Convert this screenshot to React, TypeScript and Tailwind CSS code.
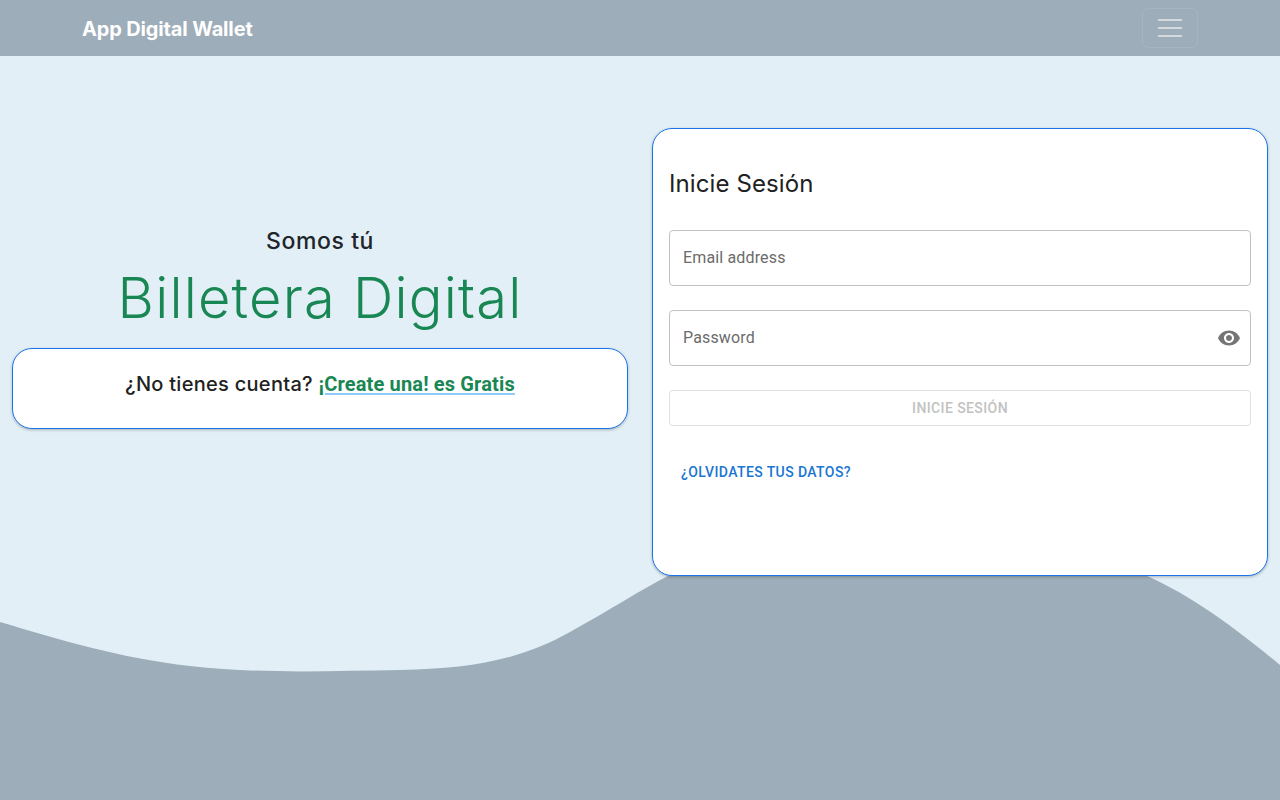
import React from 'react';

const headingFont = "font-['Inter',sans-serif]";

function EyeIcon() {
  return (
    <svg viewBox="0 0 24 24" className="w-6 h-6 fill-[#757575]">
      <path d="M12 4.5C7 4.5 2.73 7.61 1 12c1.73 4.39 6 7.5 11 7.5s9.27-3.11 11-7.5c-1.73-4.39-6-7.5-11-7.5zM12 17c-2.76 0-5-2.24-5-5s2.24-5 5-5 5 2.24 5 5-2.24 5-5 5zm0-8c-1.66 0-3 1.34-3 3s1.34 3 3 3 3-1.34 3-3-1.34-3-3-3z" />
    </svg>
  );
}

function Navbar() {
  return (
    <nav className="relative h-14 bg-[#9dadb9] flex items-center justify-between pl-[82px] pr-[82px]">
      <a href="#" className="font-['Inter',sans-serif] text-[20px] leading-7 pt-0.5 font-bold text-white tracking-[-0.15px]">
        App Digital Wallet
      </a>
      <button className="w-14 h-10 flex items-center justify-center rounded-md border border-white/10">
        <svg viewBox="0 0 30 30" className="w-[30px] h-[30px]">
          <path d="M3 7h24M3 15h24M3 23h24" stroke="#ffffff" strokeOpacity="0.55" strokeWidth="2" fill="none" />
        </svg>
      </button>
    </nav>
  );
}

function LoginCard() {
  return (
    <div className="h-[448px] p-4 bg-white border border-[#1a73e8] rounded-[20px] shadow-[0_1px_3px_rgba(0,0,0,0.25)]">
      <h2 className={`${headingFont} text-2xl leading-8 font-normal tracking-[0.1px] text-[#212121] mt-[23px] mb-[30px]`}>Inicie Sesión</h2>
      <div className="flex flex-col gap-6 font-['Roboto',sans-serif]">
        <input
          placeholder="Email address"
          className="h-14 w-full px-[13px] pb-0.5 rounded border border-[#c2c2c2] text-base tracking-[0.15px] outline-none placeholder:text-[#6b6b6b]"
        />
        <div className="relative">
          <input
            placeholder="Password"
            className="h-14 w-full px-[13px] pb-0.5 rounded border border-[#c2c2c2] text-base tracking-[0.15px] outline-none placeholder:text-[#6b6b6b]"
          />
          <span className="absolute right-[10px] top-4">
            <EyeIcon />
          </span>
        </div>
        <button className="h-9 w-full rounded border border-[#e0e0e0] text-sm font-medium tracking-[0.4px] uppercase text-[#c2c2c2]">
          Inicie Sesión
        </button>
      </div>
      <a href="#" className="inline-block mt-7 py-[7px] px-3 font-['Roboto',sans-serif] text-sm leading-[22px] font-medium tracking-[0.4px] uppercase text-[#1976d2]">
        ¿Olvidates tus datos?
      </a>
    </div>
  );
}

export default function App() {
  return (
    <div className="relative h-screen overflow-hidden bg-[#e2eff7]">
      {/* ola de fondo */}
      <svg viewBox="0 0 1280 800" className="absolute inset-0 w-full h-full">
        <path
          d="M0 622C60 640 120 658 190 666C260 674 330 671 400 670C470 669 520 660 570 632C610 610 640 590 670 575L1145 575C1195 597 1240 632 1280 665L1280 800L0 800Z"
          fill="#9dadb9"
        />
      </svg>
      <Navbar />
      <main className="relative grid grid-cols-2 gap-6 px-3 pt-[72px]">
        <section className="flex flex-col items-center pt-[95px]">
          <p className={`${headingFont} text-[23px] leading-9 font-medium tracking-[0.6px] text-[#212529]`}>Somos tú</p>
          <h1 className={`${headingFont} text-[56px] leading-[68px] font-[350] tracking-[1.2px] text-[#198754] mt-[5px] mb-4`}>Billetera Digital</h1>
          <div className="w-full h-[81px] pt-5 bg-white border border-[#1a73e8] rounded-[20px] shadow-[0_1px_3px_rgba(0,0,0,0.25)] text-center">
            <span className={`${headingFont} text-xl leading-[30px] font-medium tracking-[0.28px] text-[#212121]`}>¿No tienes cuenta? </span>
            <a href="#" className="font-['Roboto',sans-serif] text-xl leading-[30px] font-bold tracking-[0.15px] text-[#198754] underline decoration-[#90caf9] decoration-2 underline-offset-2">
              ¡Create una! es Gratis
            </a>
          </div>
        </section>
        <section>
          <LoginCard />
        </section>
      </main>
    </div>
  );
}
